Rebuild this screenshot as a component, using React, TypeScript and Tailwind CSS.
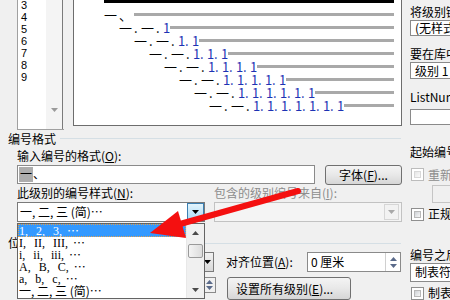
import React from "react";

function U({ children }: { children: React.ReactNode }) {
  return <span className="underline underline-offset-1">{children}</span>;
}

function DownTri({ color = "#000" }: { color?: string }) {
  return (
    <svg width="7" height="4" viewBox="0 0 7 4" className="block">
      <path d="M0 0H7L3.5 4Z" fill={color} />
    </svg>
  );
}

function UpTri({ color = "#000" }: { color?: string }) {
  return (
    <svg width="7" height="4" viewBox="0 0 7 4" className="block">
      <path d="M0 4H7L3.5 0Z" fill={color} />
    </svg>
  );
}

const rowPad = [
  "pl-[30px]",
  "pl-[45px]",
  "pl-[60px]",
  "pl-[75px]",
  "pl-[90px]",
  "pl-[105px]",
  "pl-[120px]",
  "pl-[135px]",
];

function Dash() {
  return (
    <>
      <span className="inline-block w-[15px] shrink-0">一</span>
      <span className="inline-block w-[7px] shrink-0">.</span>
    </>
  );
}

function Num({ dot }: { dot?: boolean }) {
  return (
    <>
      <span className="inline-block w-[7px] shrink-0 text-[#1e32b4]">1</span>
      {dot && <span className="inline-block w-[7px] shrink-0 text-[#1e32b4]">.</span>}
    </>
  );
}

function PreviewRow({ level }: { level: number }) {
  return (
    <div className={`flex h-[13px] items-center pr-[7px] ${rowPad[level]}`}>
      {level === 0 ? (
        <>
          <span className="inline-block w-[15px] shrink-0">一</span>
          <span className="inline-block w-[15px] shrink-0">、</span>
        </>
      ) : (
        <>
          <Dash />
          <Dash />
          {Array.from({ length: level - 1 }).map((_, k) => (
            <Num key={k} dot />
          ))}
          <Num />
        </>
      )}
      <div className="h-[3px] flex-1 bg-[#a9a9a9]" />
    </div>
  );
}

function Checkbox({ disabled }: { disabled?: boolean }) {
  return (
    <div
      className={`h-[13px] w-[13px] shrink-0 border bg-white p-[2px] ${
        disabled ? "border-[#bcbcbc]" : "border-[#8f8f8f]"
      }`}
    >
      <div
        className={`h-full w-full border bg-linear-to-br ${
          disabled
            ? "border-[#d8d8d8] from-[#e6e6e6] to-[#fafafa]"
            : "border-[#b8b8b8] from-[#cfd2d6] to-[#f7f7f7]"
        }`}
      />
    </div>
  );
}

function Button({ children, className }: { children: React.ReactNode; className: string }) {
  return (
    <div
      className={`flex items-center rounded-[3px] border border-[#707070] bg-linear-to-b from-[#f4f4f4] via-[#e8e8e8] to-[#d6d6d6] ${className}`}
    >
      {children}
    </div>
  );
}

function Ell() {
  return <span className="ml-[5px] font-['Noto_Sans_CJK_SC',sans-serif]">…</span>;
}

function ListItem({ text }: { text: string }) {
  return (
    <div className="flex h-[12px] items-center whitespace-pre pl-px font-['Liberation_Serif','Noto_Sans_CJK_SC',serif] [word-spacing:5px]">
      {text}
      <Ell />
    </div>
  );
}

export default function App() {
  return (
    <div
      lang="zh-CN"
      className="relative flex h-[300px] w-[450px] overflow-hidden bg-[#f0f0f0] font-['Noto_Sans_CJK_SC',sans-serif] text-[12px] leading-[12px] text-black"
    >
      {/* main column */}
      <div className="flex w-[402px] shrink-0 flex-col">
        {/* top: level list + preview */}
        <div className="flex h-[130px] items-start">
          <div className="h-[130px] w-[17px] shrink-0" />
          <div className="flex h-[130px] w-[47px] shrink-0 border-b border-l border-[#a0a0a0]">
            <div className="flex w-[28px] flex-col bg-white pl-[3px] font-['Liberation_Sans',sans-serif] text-[11px]">
              <div className="-mt-px flex flex-col">
                {["3", "4", "5", "6", "7", "8", "9"].map((n) => (
                  <div key={n} className="h-[12px] leading-[12px]">
                    {n}
                  </div>
                ))}
              </div>
            </div>
            <div className="flex w-[17px] flex-col items-center border-r border-[#7a7a7a] bg-[#f4f4f4] pt-[108px]">
              <DownTri color="#9a9a9a" />
            </div>
          </div>
          <div className="w-[9px] shrink-0" />
          <div className="h-[126px] w-[329px] shrink-0 border-x border-b border-[#6d6d6d] bg-white text-[13px] leading-[13px]">
            <div className="ml-[30px] mr-[7px] h-[3px] bg-black" />
            <div className="mt-[5px] flex flex-col">
              {[0, 1, 2, 3, 4, 5, 6, 7].map((l) => (
                <PreviewRow key={l} level={l} />
              ))}
            </div>
          </div>
        </div>

        {/* 编号格式 group */}
        <div className="flex h-[18px] items-center pl-[8px]">
          <span className="shrink-0">编号格式</span>
          <div className="ml-[4px] mr-[1px] h-px flex-1 bg-[#d5dfe5]" />
        </div>
        <div className="flex h-[17px] items-center pl-[17px]">
          输入编号的格式(<U>O</U>):
        </div>
        <div className="flex h-[20px] items-start pl-[17px]">
          <div className="flex h-[19px] w-[298px] shrink-0 items-center border border-[#8a8a8a] bg-white pl-px">
            <span className="flex h-[15px] w-[14px] items-center justify-center bg-[#adadad]">一</span>
            <span>、</span>
          </div>
          <div className="w-[10px] shrink-0" />
          <Button className="h-[20px] w-[77px] shrink-0 justify-center">
            字体(<U>F</U>)...
          </Button>
        </div>
        <div className="flex h-[18px] items-center pl-[17px]">
          <span className="w-[197px] shrink-0">
            此级别的编号样式(<U>N</U>):
          </span>
          <span className="text-[#8d8d8d]">
            包含的级别编号来自(<U>I</U>):
          </span>
        </div>
        <div className="flex h-[20px] pl-[17px]">
          <div className="flex h-[20px] w-[188px] shrink-0 items-center border border-[#7a7a7a] bg-white pl-[2px]">
            <span className="flex-1 whitespace-nowrap">一, 二, 三 (简)…</span>
            <div className="flex h-full w-[17px] items-center justify-center border border-[#3c7fb1] bg-linear-to-b from-[#e3f4fc] to-[#a9dbf6]">
              <DownTri />
            </div>
          </div>
          <div className="w-[9px] shrink-0" />
          <div className="flex h-[20px] w-[188px] shrink-0 items-center justify-end border border-[#c2c2c2] bg-[#f4f4f4] pr-[2px]">
            <div className="flex h-[16px] w-[15px] items-center justify-center border border-[#d6d6d6] bg-[#f2f2f2]">
              <DownTri color="#a8a8a8" />
            </div>
          </div>
        </div>

        {/* 位置 group */}
        <div className="mt-[12px] flex h-[18px] items-center pl-[8px]">
          <span className="shrink-0">位置</span>
          <div className="ml-[4px] mr-[1px] h-px flex-1 bg-[#d5dfe5]" />
        </div>
        <div className="flex h-[20px] items-center">
          <div className="ml-[17px] flex h-[20px] w-[197px] shrink-0 items-center justify-end border border-[#7a7a7a] bg-white">
            <div className="flex h-full w-[12px] items-center justify-center bg-linear-to-b from-[#f2f2f2] to-[#d8d8d8]">
              <DownTri />
            </div>
          </div>
          <span className="ml-[12px] w-[81px] shrink-0">
            对齐位置(<U>A</U>):
          </span>
          <div className="flex h-[20px] w-[94px] shrink-0 items-center border border-[#8a8a8a] bg-white pl-[3px]">
            <span className="flex-1">0 厘米</span>
            <div className="flex h-full w-[15px] flex-col items-center justify-center gap-[3px] border-l border-[#d0d0d0]">
              <UpTri color="#5a6a8a" />
              <DownTri color="#5a6a8a" />
            </div>
          </div>
        </div>
        <div className="mt-[5px] flex items-start">
          <div className="ml-[17px] flex h-[16px] w-[199px] shrink-0 justify-end border border-[#8a8a8a] bg-white">
            <div className="flex h-full w-[12px] flex-col items-center justify-center gap-[2px] bg-[#f0f0f0]">
              <UpTri color="#5a6a8a" />
              <DownTri color="#5a6a8a" />
            </div>
          </div>
          <Button className="ml-[11px] h-[23px] w-[124px] shrink-0 pl-[8px]">
            设置所有级别(<U>E</U>)...
          </Button>
        </div>
      </div>

      {/* right column */}
      <div className="ml-[8px] flex w-[200px] shrink-0 flex-col">
        <div className="mt-[6px] h-[12px] whitespace-nowrap">将级别链接到样式(<U>K</U>):</div>
        <div className="mt-[2px] flex h-[17px] w-[180px] items-center border border-[#8a8a8a] bg-white pl-[4px]">
          (无样式)
        </div>
        <div className="mt-[12px] h-[12px] whitespace-nowrap">要在库中显示的级别(<U>H</U>):</div>
        <div className="mt-[2px] flex h-[19px] w-[180px] items-center border border-[#8a8a8a] bg-white pl-[4px]">
          级别 1
        </div>
        <div className="mt-[12px] h-[12px] whitespace-nowrap">ListNum 域列表名(<U>T</U>):</div>
        <div className="mt-[6px] h-[17px] w-[180px] border border-[#8a8a8a] bg-white" />
        <div className="mt-[21px] h-[12px] whitespace-nowrap">起始编号(<U>S</U>):</div>
        <div className="mt-[10px] flex h-[13px] items-center pl-px">
          <Checkbox disabled />
          <span className="ml-[4px] whitespace-nowrap text-[#8d8d8d]">重新开始列表的间隔(<U>R</U>):</span>
        </div>
        <div className="ml-[22px] mt-[4px] h-[19px] w-[100px] border border-[#c5c5c5] bg-[#f0f0f0]" />
        <div className="mt-[5px] flex h-[13px] items-center pl-px">
          <Checkbox />
          <span className="ml-[4px] whitespace-nowrap">正规形式编号(<U>G</U>)</span>
        </div>
        <div className="mt-[28px] h-[12px] whitespace-nowrap">编号之后(<U>W</U>):</div>
        <div className="mt-[2px] flex h-[21px] w-[180px] items-center border border-[#8a8a8a] bg-white pl-[4px]">
          制表符
        </div>
        <div className="mt-[5px] flex h-[13px] items-center pl-px">
          <Checkbox />
          <span className="ml-[4px] whitespace-nowrap">制表位添加位置(<U>B</U>):</span>
        </div>
      </div>

      {/* open dropdown list */}
      <div className="absolute left-[17px] top-[223px] flex h-[76px] w-[188px] border border-[#646464] bg-white">
        <div className="flex w-[168px] flex-col whitespace-nowrap">
          <div className="flex h-[13px] items-center whitespace-pre bg-[#3399ff] pl-px font-['Liberation_Serif','Noto_Sans_CJK_SC',serif] text-white outline outline-1 -outline-offset-1 outline-dotted outline-[#e0a050] [word-spacing:5px]">
            {"1, 2, 3,"}
            <Ell />
          </div>
          <ListItem text="I, II, III," />
          <ListItem text="i, ii, iii," />
          <ListItem text="A, B, C," />
          <ListItem text="a, b, c," />
          <div className="flex h-[12px] items-center pl-px">一, 二, 三 (简)…</div>
        </div>
        <div className="flex w-[18px] flex-col border-l border-[#e8e8e8] bg-[#f0f0f0]">
          <div className="flex h-[17px] items-center justify-center">
            <UpTri color="#4a4a4a" />
          </div>
          <div className="mx-px mt-[3px] h-[14px] rounded-[2px] border border-[#9a9a9a] bg-linear-to-r from-[#f4f4f4] to-[#dcdcdc]" />
          <div className="flex-1" />
          <div className="flex h-[17px] items-center justify-center">
            <DownTri color="#4a4a4a" />
          </div>
        </div>
      </div>

      {/* red annotation arrow */}
      <svg
        className="pointer-events-none absolute left-0 top-0"
        width="450"
        height="300"
        viewBox="0 0 450 300"
      >
        <line x1="298" y1="191" x2="180" y2="224" stroke="#f41010" strokeWidth="6" strokeLinecap="round" />
        <polygon points="150,233 178,211 186,238" fill="#f41010" />
      </svg>
    </div>
  );
}
